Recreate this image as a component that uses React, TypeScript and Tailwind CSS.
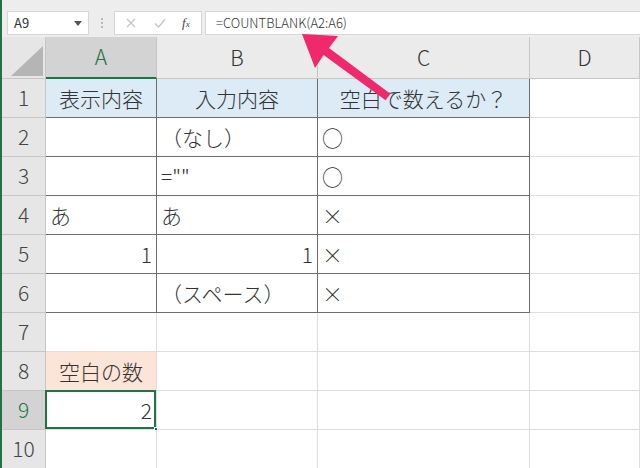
// Excel sheet — COUNTBLANK example

type Align = 'left' | 'center' | 'right';
type Cell = { text?: string; align?: Align; bg?: string; dark?: boolean };

const COLS = ['A', 'B', 'C', 'D'];
const COL_W = ['w-[111px]', 'w-[161px]', 'w-[212px]', 'w-[110px]'];

const ROWS: Cell[][] = [
  [
    { text: '表示内容', align: 'center', bg: 'bg-[#ddebf7]', dark: true },
    { text: '入力内容', align: 'center', bg: 'bg-[#ddebf7]', dark: true },
    { text: '空白で数えるか？', align: 'center', bg: 'bg-[#ddebf7]', dark: true },
    {},
  ],
  [{ dark: true }, { text: '（なし）', dark: true }, { text: '○', dark: true }, {}],
  [{ dark: true }, { text: '=""', dark: true }, { text: '○', dark: true }, {}],
  [{ text: 'あ', dark: true }, { text: 'あ', dark: true }, { text: '×', dark: true }, {}],
  [{ text: '1', align: 'right', dark: true }, { text: '1', align: 'right', dark: true }, { text: '×', dark: true }, {}],
  [{ dark: true }, { text: '（スペース）', dark: true }, { text: '×', dark: true }, {}],
  [{}, {}, {}, {}],
  [{ text: '空白の数', align: 'center', bg: 'bg-[#fce4d6]' }, {}, {}, {}],
  [{ text: '2', align: 'right' }, {}, {}, {}],
  [{}, {}, {}, {}],
];

function FormulaBar() {
  return (
    <div className="flex h-[37px] items-start bg-[#ededed] pl-[5px] pt-[11px]">
      <div className="flex h-[24px] w-[82px] items-center justify-between border border-[#d6d6d6] bg-white pl-[6px] pr-[6px] text-[13px] text-[#333]">
        <span>A9</span>
        <svg width="8" height="5" viewBox="0 0 8 5">
          <path d="M0 0h8L4 5z" fill="#555" />
        </svg>
      </div>
      <div className="flex h-[24px] w-[25px] flex-col items-center justify-center gap-[2px]">
        <span className="h-[2px] w-[2px] bg-[#bbb]" />
        <span className="h-[2px] w-[2px] bg-[#bbb]" />
        <span className="h-[2px] w-[2px] bg-[#bbb]" />
      </div>
      <div className="flex h-[24px] w-[88px] items-center border border-[#d6d6d6] bg-white pl-[11px]">
        <svg width="10" height="10" viewBox="0 0 10 10" className="mr-[18px]">
          <path d="M1 1l8 8M9 1l-8 8" stroke="#c4c4c4" strokeWidth="1.3" />
        </svg>
        <svg width="12" height="10" viewBox="0 0 12 10" className="mr-[16px]">
          <path d="M1 5.5l3.5 3.5L11 1.5" stroke="#c4c4c4" strokeWidth="1.3" fill="none" />
        </svg>
        <span className="font-['Liberation_Serif'] text-[13px] italic text-[#444]">
          f<span className="text-[9px]">x</span>
        </span>
      </div>
      <div className="ml-[3px] flex h-[24px] flex-1 items-center border border-r-0 border-[#d6d6d6] bg-white pl-[10px] text-[13px] font-light text-[#333]">
        =COUNTBLANK(A2:A6)
      </div>
    </div>
  );
}

function ColumnHeader() {
  return (
    <div className="flex h-[42px]">
      <div className="relative w-[44px] border-r border-b border-[#c6c6c6] bg-[#e6e6e6]">
        <svg width="32" height="30" viewBox="0 0 32 30" className="absolute bottom-[2px] right-[2px]">
          <path d="M32 0v30H0z" fill="#b5b5b5" />
        </svg>
      </div>
      {COLS.map((c, i) => {
        const sel = c === 'A';
        return (
          <div
            key={c}
            className={`flex items-center justify-center text-[21px] font-light ${COL_W[i]} ${
              sel
                ? 'border-r border-b-2 border-r-[#c6c6c6] border-b-[#217346] bg-[#d3d3d3] text-[#217346]'
                : 'border-r border-b border-[#c6c6c6] bg-[#ebebeb] text-[#333]'
            }`}
          >
            {c}
          </div>
        );
      })}
    </div>
  );
}

export default function App() {
  return (
    <div className="relative h-[468px] w-[640px] overflow-hidden border-l-2 border-[#217346] bg-white font-['Noto_Sans_CJK_JP',sans-serif] text-[#333]">
      <FormulaBar />
      <ColumnHeader />
      {ROWS.map((row, r) => {
        const n = r + 1;
        const selRow = n === 9;
        return (
          <div key={n} className="flex h-[39px]">
            <div
              className={`flex w-[44px] items-center justify-center border-r border-b border-[#c6c6c6] text-[21px] font-light ${
                selRow ? 'bg-[#d3d3d3] text-[#217346]' : 'bg-[#e6e6e6] text-[#444]'
              }`}
            >
              {n}
            </div>
            {row.map((cell, c) => {
              const align =
                cell.align === 'center' ? 'justify-center' : cell.align === 'right' ? 'justify-end' : 'justify-start';
              const border = cell.dark ? 'border-[#6e6e6e]' : 'border-[#dedede]';
              const selected = selRow && c === 0;
              return (
                <div
                  key={c}
                  className={`relative flex items-center border-r border-b px-[4px] text-[21px] font-light leading-none ${COL_W[c]} ${align} ${border} ${
                    cell.bg ?? 'bg-white'
                  }`}
                >
                  {cell.text}
                  {selected && (
                    <>
                      <div className="pointer-events-none absolute -left-px -top-px bottom-0 right-0 border-2 border-[#217346]" />
                      <div className="absolute -bottom-[3px] -right-[3px] h-[5px] w-[5px] border border-white bg-[#217346]" />
                    </>
                  )}
                </div>
              );
            })}
          </div>
        );
      })}

      {/* pointer arrow */}
      <svg className="pointer-events-none absolute left-[-2px] top-0" width="640" height="468" viewBox="0 0 640 468">
        <polygon
          points="302,34 338,36 329,48 390.4,93.8 385.6,100.2 323.6,55 315,68"
          fill="#f0286c"
        />
      </svg>
    </div>
  );
}
